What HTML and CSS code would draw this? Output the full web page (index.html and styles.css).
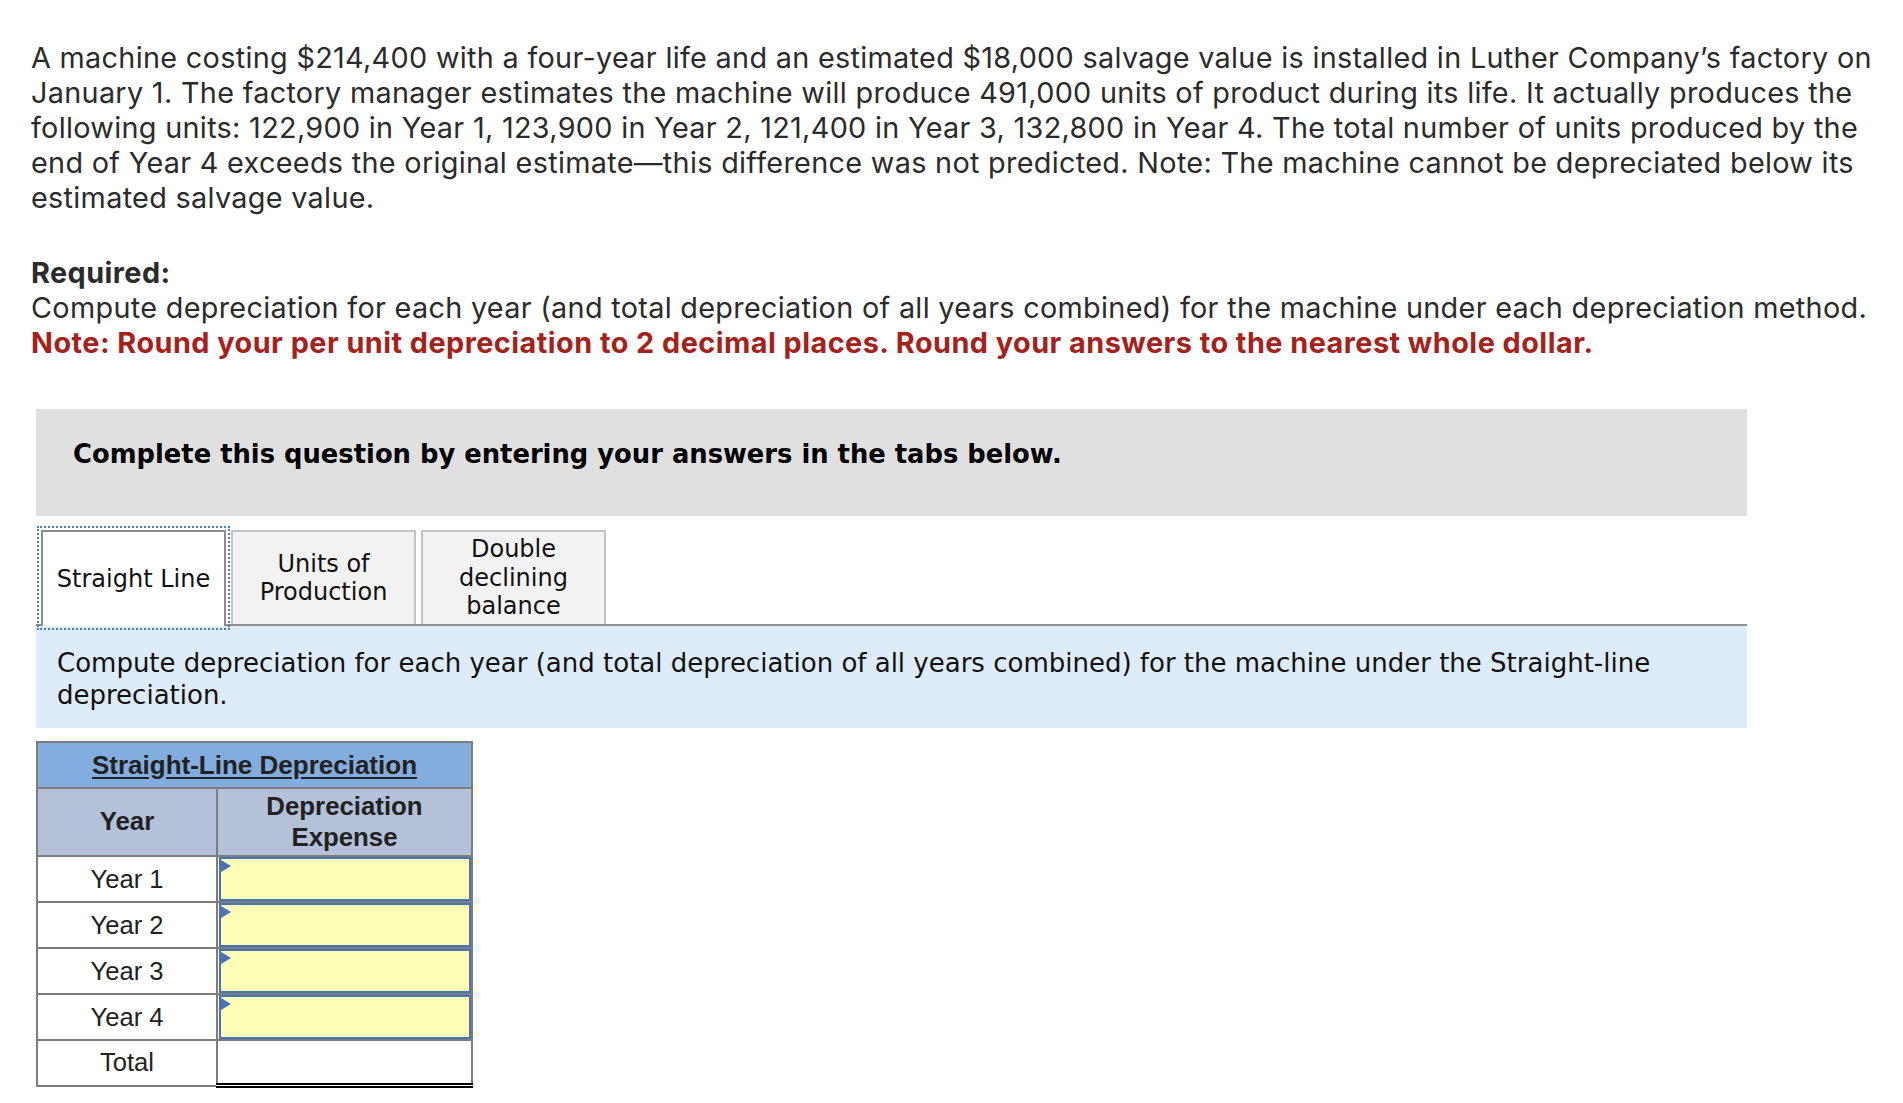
FILE: index.html
```html
<!DOCTYPE html>
<html lang="en">
<head>
<meta charset="utf-8">
<title>Depreciation question</title>
<link rel="stylesheet" href="styles.css">
</head>
<body>
<div class="page">
  <p class="intro">A machine costing $214,400 with a four-year life and an estimated $18,000 salvage value is installed in Luther Company’s factory on January 1. The factory manager estimates the machine will produce 491,000 units of product during its life. It actually produces the following units: 122,900 in Year 1, 123,900 in Year 2, 121,400 in Year 3, 132,800 in Year 4. The total number of units produced by the end of Year 4 exceeds the original estimate—this difference was not predicted. Note: The machine cannot be depreciated below its estimated salvage value.</p>

  <div class="required">
    <p class="req-title">Required:</p>
    <p>Compute depreciation for each year (and total depreciation of all years combined) for the machine under each depreciation method.</p>
    <p class="note">Note: Round your per unit depreciation to 2 decimal places. Round your answers to the nearest whole dollar.</p>
  </div>

  <div class="question">
    <div class="banner">Complete this question by entering your answers in the tabs below.</div>

    <div class="tabs">
      <div class="tab active">Straight Line</div>
      <div class="tab">Units of<br>Production</div>
      <div class="tab">Double<br>declining<br>balance</div>
    </div>

    <div class="instructions">Compute depreciation for each year (and total depreciation of all years combined) for the machine under the Straight-line depreciation.</div>

    <table class="dep">
      <thead>
        <tr><th colspan="2" class="title"><span>Straight-Line Depreciation</span></th></tr>
        <tr class="heads"><th class="c1">Year</th><th class="c2">Depreciation<br>Expense</th></tr>
      </thead>
      <tbody>
        <tr><td class="c1">Year 1</td><td class="c2"><div class="input"></div></td></tr>
        <tr><td class="c1">Year 2</td><td class="c2"><div class="input"></div></td></tr>
        <tr><td class="c1">Year 3</td><td class="c2"><div class="input"></div></td></tr>
        <tr><td class="c1">Year 4</td><td class="c2"><div class="input"></div></td></tr>
        <tr class="total"><td class="c1">Total</td><td class="c2"></td></tr>
      </tbody>
    </table>
  </div>
</div>
</body>
</html>
```

FILE: styles.css
```css
html, body {
  margin: 0;
  padding: 0;
  background: #ffffff;
}

.page {
  padding: 40px 0 0 31px;
  width: 1862px;
  font-family: Inter, "Open Sans", sans-serif;
  font-size: 28.8px;
  letter-spacing: 0.31px;
  line-height: 35px;
  color: #2b2b2b;
}

.page p {
  margin: 0;
}

.required {
  margin-top: 40px;
}

.req-title {
  font-weight: 700;
  letter-spacing: 0.45px;
}

.note {
  color: #a5211b;
  font-weight: 700;
  letter-spacing: 0.48px;
}

.question {
  margin-top: 49px;
  margin-left: 5px;
  width: 1711px;
  font-family: "DejaVu Sans", Verdana, sans-serif;
  letter-spacing: 0;
  color: #000;
}

.banner {
  box-sizing: border-box;
  height: 107px;
  background: #e0e0e0;
  padding: 29px 0 0 37px;
  font-size: 25.8px;
  line-height: 32px;
  font-weight: 700;
}

.tabs {
  display: flex;
  gap: 5px;
  margin-top: 14px;
  padding-left: 5px;
  border-bottom: 2px solid #8e8e8e;
}

.tab {
  box-sizing: border-box;
  width: 185px;
  height: 94px;
  border: 2px solid #c4c4c4;
  border-bottom: none;
  background: #f2f2f2;
  display: flex;
  align-items: center;
  justify-content: center;
  text-align: center;
  font-size: 24px;
  line-height: 28.5px;
  color: #111;
}

.tab.active {
  background: #ffffff;
  border-color: #8c8c8c;
  height: 96px;
  margin-bottom: -2px;
  outline: 2px dotted #4a7cc4;
  outline-offset: 2px;
}

.instructions {
  background: #deebf8;
  padding: 22px 20px 17px 21px;
  font-size: 26px;
  line-height: 31.5px;
  color: #111;
}

.dep {
  margin-top: 13px;
  border-collapse: collapse;
  font-family: "Liberation Sans", Arial, sans-serif;
  color: #222;
  width: 437px;
}

.dep th, .dep td {
  border: 2px solid #7d7d7d;
  padding: 0;
  text-align: center;
}

.dep .title {
  background: #84addf;
  height: 44px;
  font-size: 26px;
  font-weight: 700;
}

.dep .title span {
  text-decoration: underline;
  text-underline-offset: 3px;
}

.dep .heads th {
  background: #b4c1d9;
  height: 66px;
  font-size: 25.8px;
  line-height: 31.5px;
  font-weight: 700;
}

.dep .c1 {
  width: 178px;
}

.dep td {
  height: 44px;
  font-size: 25.6px;
  background: #fff;
}

.input {
  box-sizing: border-box;
  height: 44px;
  margin: 0 0 0 1px;
  border: 2px solid #4a72b6;
  background: #ffffb5;
  position: relative;
}

.input::before {
  content: "";
  position: absolute;
  left: 0;
  top: 1px;
  border-style: solid;
  border-width: 6px 0 6px 10px;
  border-color: transparent transparent transparent #4a72b6;
}

.dep .total td {
  height: 42px;
}

.dep .total td.c2 {
  border-top: 2px solid #000;
  border-bottom: 5px double #000;
}
```
